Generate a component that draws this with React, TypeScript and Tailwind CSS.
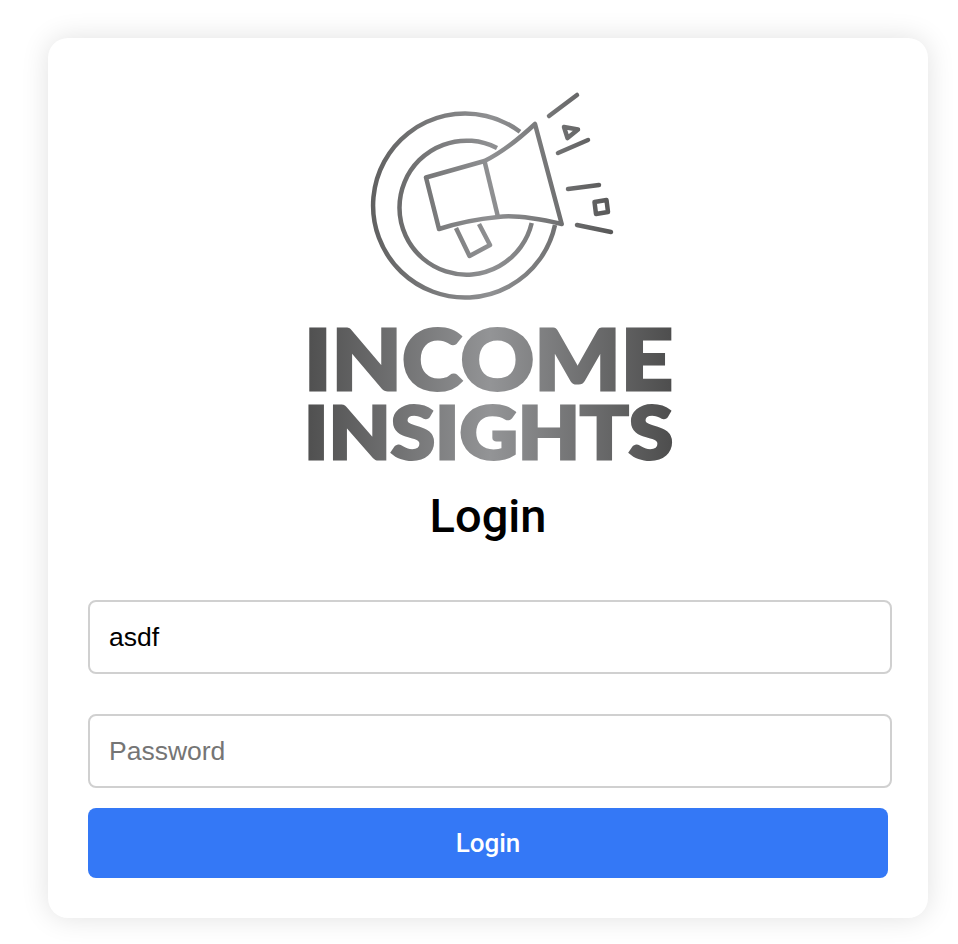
export default function App() {
  return (
    <div className="min-h-[944px] bg-white pt-[38px] pl-[48px]">
      <div className="w-[880px] h-[880px] rounded-[20px] bg-white px-[40px] pt-[47px] shadow-[0_0_28px_rgba(0,0,0,0.12)]">
        <Logo />
        <h1 className="mt-[21px] h-[50px] text-center text-[47px] leading-[50px] font-medium text-black font-['Roboto',sans-serif]">Login</h1>
        <form className="mt-[59px]" onSubmit={(e) => e.preventDefault()}>
          <input
            readOnly
            value="asdf"
            className="block h-[74px] w-[804px] rounded-[8px] border-2 border-[#d0d0d0] bg-white pl-[19px] text-[26.5px] text-black outline-none font-['Liberation_Sans',sans-serif]"
          />
          <input
            readOnly
            placeholder="Password"
            className="mt-[40px] block h-[74px] w-[804px] rounded-[8px] border-2 border-[#d0d0d0] bg-white pl-[19px] text-[26.5px] text-black outline-none placeholder:text-[#757575] font-['Liberation_Sans',sans-serif]"
          />
          <button className="mt-[20px] block h-[70px] w-full rounded-[8px] bg-[#3478f6] text-center text-[26px] font-medium text-white font-['Roboto',sans-serif]">Login</button>
        </form>
      </div>
    </div>
  );
}

function Logo() {
  return (
    <svg width="800" height="385" viewBox="88 85 800 385" className="block">
      <defs>
        <linearGradient id="word" gradientUnits="userSpaceOnUse" x1="305" y1="0" x2="676" y2="0">
          <stop offset="0" stopColor="#4f4f4f" />
          <stop offset="0.5" stopColor="#939496" />
          <stop offset="1" stopColor="#4c4c4c" />
        </linearGradient>
        <linearGradient id="mark" gradientUnits="userSpaceOnUse" x1="370" y1="0" x2="612" y2="0">
          <stop offset="0" stopColor="#606060" />
          <stop offset="0.5" stopColor="#8f9092" />
          <stop offset="1" stopColor="#585858" />
        </linearGradient>
      </defs>
      <g fill="none" stroke="url(#mark)" strokeWidth="4.5" strokeLinejoin="round">
        <path d="M520 131.7A92 92 0 1 0 555 225" />
        <path d="M497 148A67 67 0 1 0 531.7 223" />
        <path d="M426 177.5L484.5 161Q507 150 535 124L561.7 224Q518 214 498 217Q467 220 439 229Z" />
        <path d="M484.5 161L498 217" />
        <path d="M456 228L469.5 256L490 245L479 224" />
        <g strokeLinecap="round">
          <path d="M549 116L577 95" />
          <path d="M558 153L588 140" />
          <path d="M568 189L599 185" />
          <path d="M577 225L611 232" />
        </g>
        <path d="M564 127L578 129.5L567.5 138Z" />
        <path d="M594.5 202L606.5 200L608 212L596 214Z" />
      </g>
      <g fill="url(#word)" stroke="url(#word)" strokeWidth="3" fontFamily="Lato, sans-serif" fontWeight="900">
        <text x="304" y="390" fontSize="84" textLength="369" lengthAdjust="spacingAndGlyphs">INCOME</text>
        <text x="304" y="458.5" fontSize="73" textLength="369" lengthAdjust="spacingAndGlyphs">INSIGHTS</text>
      </g>
    </svg>
  );
}
